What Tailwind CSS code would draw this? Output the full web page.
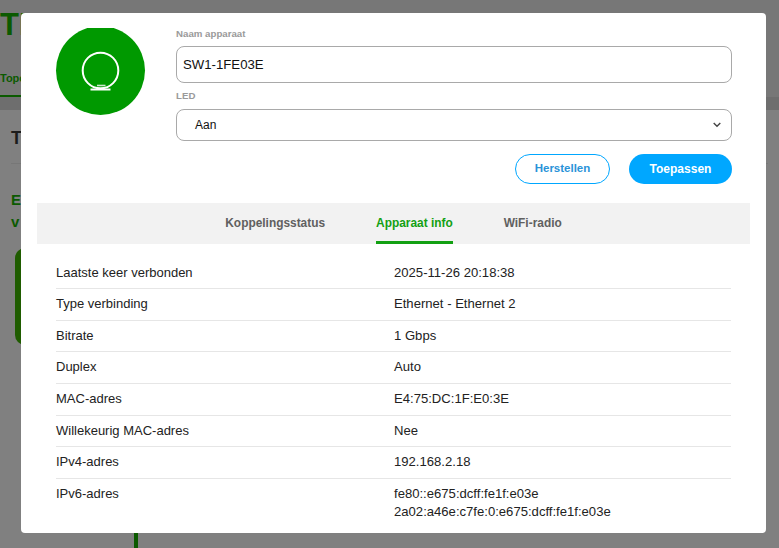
<!DOCTYPE html>
<html lang="nl">
<head>
    <meta charset="UTF-8">
    <meta name="viewport" content="width=device-width, initial-scale=1.0">
    <title>Apparaat info</title>
    <script src="https://cdn.jsdelivr.net/npm/@tailwindcss/browser@4"></script>
</head>
<body class="relative h-[548px] w-[779px] overflow-hidden bg-[#808080] font-['Liberation_Sans',Arial,sans-serif]">
    <!-- page behind the dialog, dimmed -->
    <div class="flex h-full flex-col">
        <header class="h-[97px] bg-[#777777]">
            <div class="h-[40px] pt-[10px] text-[31px] leading-[30px] font-bold text-[#0b5a00]">TI</div>
            <div class="mt-[31px] h-[26px] w-[21px] border-b-2 border-[#0b5a00] text-[11px] leading-[14px] font-bold whitespace-nowrap text-[#0b5a00]">Topologie</div>
        </header>
        <div class="h-[13px] bg-[#6e6e6e]"></div>
        <main class="relative flex-1 bg-[#808080]">
            <div class="px-[11px] pt-[19px] text-[18px] leading-[18px] font-bold text-[#1c1c1c]">T</div>
            <div class="mx-[11px] mt-[16px] border-t border-[#777777]"></div>
            <div class="mt-[25px] pl-[11px] text-[15px] leading-[22px] font-bold text-[#0b5a00]">E<br>v</div>
            <div class="mt-[15px] ml-[15px] h-[97px] w-[20px] rounded-l-[10px] bg-[#1f5c00]"></div>
            <div class="absolute top-[420px] left-[134px] h-[30px] w-[4px] bg-[#0b5a00]"></div>
        </main>
    </div>

    <!-- dialog -->
    <div class="absolute top-[13px] left-[21px] flex h-[520px] w-[745px] flex-col rounded-[4px] bg-white px-[16px] pt-[15px]">
        <div class="flex h-[175px] overflow-hidden pl-[19px]">
            <div class="-mt-[2px] flex h-[89px] w-[89px] shrink-0 items-center justify-center rounded-full bg-[#009900]">
                <svg width="40" height="40" viewBox="0 0 40 40" fill="none" stroke="white">
                    <circle cx="19.500" cy="19.500" r="17.800" stroke-width="2"/>
                    <path d="M9.500 38.500 H29.500" stroke-width="2"/>
                    <path d="M16 34.500 H24.500" stroke-width="1.600" stroke="#cfe9cf"/>
                </svg>
            </div>
            <div class="ml-[31px] flex w-[556px] flex-col">
                <label class="text-[9.700px] leading-[12px] font-bold text-[#9a9a9a]">Naam apparaat</label>
                <div class="mt-[6px] flex h-[37px] items-center rounded-[8px] border border-[#a9a9a9] pl-[6px] text-[13.200px] text-[#111111]">SW1-1FE03E</div>
                <label class="mt-[7px] text-[9.700px] leading-[12px] font-bold text-[#9a9a9a]">LED</label>
                <div class="mt-[7px] flex h-[32px] items-center justify-between rounded-[8px] border border-[#a9a9a9] pr-[10px] pl-[18px] text-[12px] text-[#111111]">
                    Aan
                    <svg width="8" height="6" viewBox="0 0 8 6" fill="none" stroke="#444444" stroke-width="1.400"><path d="M0.700 1 L4 4.300 L7.300 1"/></svg>
                </div>
                <div class="mt-[13px] flex justify-end gap-[19px]">
                    <button class="h-[30px] w-[95px] rounded-full border-[1.500px] border-[#00a7ff] text-[11.500px] font-bold text-[#2a93d8]">Herstellen</button>
                    <button class="h-[30px] w-[103px] rounded-full bg-[#00a7ff] text-[12px] font-bold text-white">Toepassen</button>
                </div>
            </div>
        </div>

        <nav class="flex h-[41px] justify-center gap-[51px] bg-[#f2f2f2] text-[11.900px] font-bold text-[#606060]">
            <a class="pt-[12px]">Koppelingsstatus</a>
            <a class="border-b-[3px] border-[#12a012] pt-[12px] text-[#12a012]">Apparaat info</a>
            <a class="pt-[12px]">WiFi-radio</a>
        </nav>

        <dl class="mt-[12px] px-[19px] text-[13px] leading-[16px] text-[#222222]">
            <div class="flex h-[33px] border-b border-[#e6e6e6] pt-[9px]"><dt class="w-[338px]">Laatste keer verbonden</dt><dd class="text-[13.100px]">2025-11-26 20:18:38</dd></div>
            <div class="flex h-[32px] border-b border-[#e6e6e6] pt-[7px]"><dt class="w-[338px]">Type verbinding</dt><dd class="text-[13.100px]">Ethernet - Ethernet 2</dd></div>
            <div class="flex h-[31px] border-b border-[#e6e6e6] pt-[7px]"><dt class="w-[338px]">Bitrate</dt><dd class="text-[13.100px]">1 Gbps</dd></div>
            <div class="flex h-[32px] border-b border-[#e6e6e6] pt-[7px]"><dt class="w-[338px]">Duplex</dt><dd class="text-[13.100px]">Auto</dd></div>
            <div class="flex h-[32px] border-b border-[#e6e6e6] pt-[7px]"><dt class="w-[338px]">MAC-adres</dt><dd class="text-[13.100px]">E4:75:DC:1F:E0:3E</dd></div>
            <div class="flex h-[31px] border-b border-[#e6e6e6] pt-[7px]"><dt class="w-[338px]">Willekeurig MAC-adres</dt><dd class="text-[13.100px]">Nee</dd></div>
            <div class="flex h-[32px] border-b border-[#e6e6e6] pt-[7px]"><dt class="w-[338px]">IPv4-adres</dt><dd class="text-[13.100px]">192.168.2.18</dd></div>
            <div class="flex pt-[7px]"><dt class="w-[338px]">IPv6-adres</dt><dd class="text-[13.100px]">fe80::e675:dcff:fe1f:e03e<br><span class="mt-[2px] block">2a02:a46e:c7fe:0:e675:dcff:fe1f:e03e</span></dd></div>
        </dl>
    </div>
</body>
</html>
